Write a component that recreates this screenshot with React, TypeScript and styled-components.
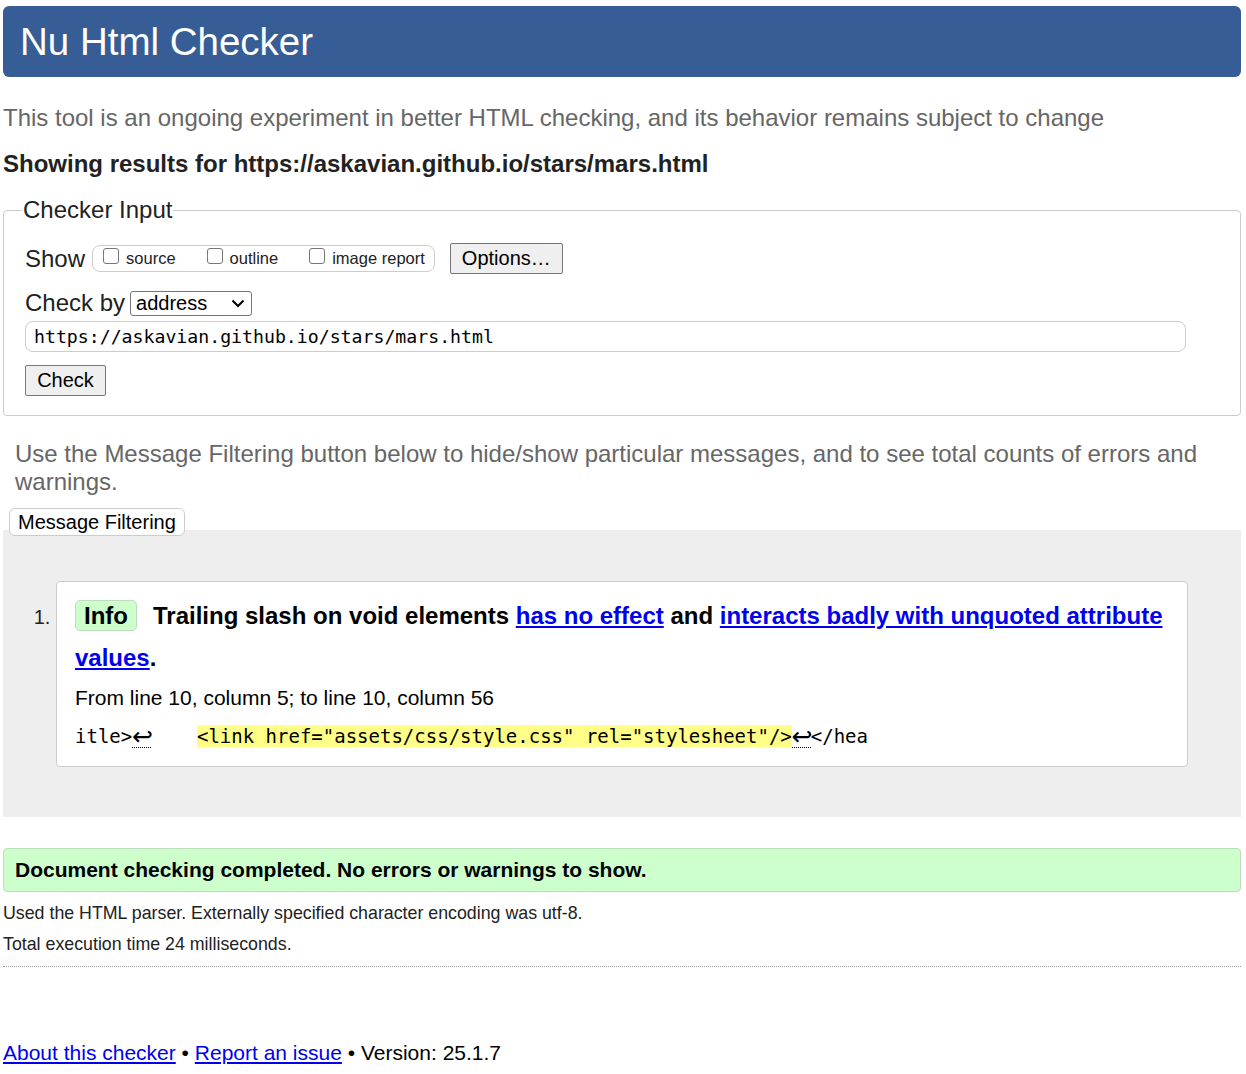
import React from "react";
import styled, { createGlobalStyle } from "styled-components";

const Global = createGlobalStyle`
  html, body { margin: 0; padding: 0; background: #fff; }
  body { font-family: "Liberation Sans", Arial, sans-serif; color: #000; }
`;

const Page = styled.div`
  padding: 6px 5px 0 3px;
`;

const Header = styled.h1`
  margin: 0;
  background: #365d95;
  color: #fff;
  border-radius: 6px;
  height: 71px;
  display: flex;
  align-items: center;
  padding-left: 17px;
  font-size: 38.5px;
  font-weight: normal;
`;

const Intro = styled.p`
  margin: 26px 0 0 0;
  color: #666;
  font-size: 24px;
  line-height: 30px;
`;

const Results = styled.h2`
  margin: 16px 0 0 0;
  font-size: 24px;
  line-height: 30px;
  color: #222;
`;

const Fieldset = styled.fieldset`
  margin: 17px 0 0 0;
  border: 1px solid #ccc;
  border-radius: 4px;
  padding: 4px 54px 19px 21px;
`;

const Legend = styled.legend`
  font-size: 24px;
  padding: 0 1px;
  margin-left: -3px;
  color: #222;
`;

const Row = styled.div`
  display: flex;
  align-items: center;
  font-size: 24px;
  color: #222;
`;

const ShowRow = styled(Row)`
  margin-top: 15px;
  gap: 7px;
`;

const CheckGroup = styled.div`
  display: flex;
  align-items: center;
  border: 1px solid #ccc;
  border-radius: 8px;
  height: 25px;
  padding: 0 9px 0 10px;
  gap: 31px;
  margin-right: 8px;
`;

const CheckLabel = styled.label`
  display: flex;
  align-items: center;
  font-size: 16.5px;
  color: #222;
  gap: 7px;
`;

const Box = styled.span`
  width: 16px;
  height: 16px;
  border: 1px solid #767676;
  border-radius: 3px;
  box-sizing: border-box;
  margin-top: -6px;
`;

const Button = styled.button`
  font-family: "Liberation Sans", Arial, sans-serif;
  font-size: 20px;
  color: #000;
  background: #efefef;
  border: 1px solid #767676;
  border-radius: 2px;
  padding: 0 11px;
  height: 31px;
`;

const CheckByRow = styled(Row)`
  margin-top: 15px;
  gap: 5px;
`;

const Select = styled.div`
  display: flex;
  align-items: center;
  justify-content: space-between;
  width: 122px;
  height: 25px;
  box-sizing: border-box;
  border: 1px solid #767676;
  border-radius: 3px;
  padding: 0 6px 0 5px;
  font-size: 20px;
  color: #000;
`;

const UrlInput = styled.div`
  margin-top: 4px;
  height: 31px;
  box-sizing: border-box;
  border: 1px solid #ccc;
  border-radius: 8px;
  display: flex;
  align-items: center;
  padding-left: 8px;
  font-family: "DejaVu Sans Mono", "Liberation Mono", monospace;
  font-size: 18.2px;
  color: #000;
`;

const CheckButton = styled(Button)`
  margin-top: 13px;
  width: 81px;
`;

const Filtering = styled.p`
  margin: 24px 0 0 12px;
  color: #666;
  font-size: 24px;
  line-height: 28px;
`;

const FilterButton = styled.button`
  display: block;
  font-family: "Liberation Sans", Arial, sans-serif;
  font-size: 20px;
  color: #000;
  background: #fff;
  border: 1px solid #ccc;
  border-radius: 6px;
  height: 28px;
  padding: 0 8px;
  margin: 12px 0 0 6px;
  position: relative;
  z-index: 1;
`;

const Results2 = styled.div`
  background: #eee;
  margin-top: -6px;
  padding: 51px 53px 50px 0;
`;

const List = styled.ol`
  margin: 0;
  padding: 0 0 0 53px;
`;

const Item = styled.li`
  background: #fff;
  border: 1px solid #ccc;
  border-radius: 4px;
  padding: 13px 18px 18px 18px;
  font-size: 20px;
  &::marker { color: #222; font-size: 20px; }
`;

const Message = styled.p`
  margin: 0;
  font-size: 24px;
  font-weight: bold;
  line-height: 42px;
`;

const Badge = styled.strong`
  display: inline-block;
  background: #cfc;
  border: 1px solid #bdb;
  border-radius: 5px;
  padding: 0 8px;
  line-height: 29px;
  margin-right: 16px;
`;

const Link = styled.a`
  color: #00e;
  text-decoration: underline;
`;

const Location = styled.p`
  margin: 7px 0 0 0;
  font-size: 21px;
  color: #000;
`;

const Extract = styled.p`
  margin: 14px 0 0 0;
  font-family: "DejaVu Sans Mono", "Liberation Mono", monospace;
  font-size: 19px;
  line-height: 24px;
  white-space: pre;
  color: #000;
`;

const Mark = styled.mark`
  background: #ff8;
  color: #000;
`;

const Lf = styled.span`
  display: inline-block;
  font-family: "DejaVu Sans", sans-serif;
  font-size: 25px;
  line-height: 20px;
  width: 19px;
  border-bottom: 1px dotted #000;
  vertical-align: -2px;
`;

const Success = styled.p`
  margin: 31px 0 0 0;
  background: #cfc;
  border: 1px solid #bdb;
  border-radius: 4px;
  padding: 0 11px;
  height: 42px;
  display: flex;
  align-items: center;
  font-size: 21px;
  font-weight: bold;
  color: #000;
`;

const DetailsBlock = styled.div`
  margin-top: 6px;
`;

const Details = styled.p`
  margin: 0;
  font-size: 17.8px;
  line-height: 31px;
  color: #222;
`;

const Rule = styled.hr`
  margin: 6px 0 0 0;
  border: none;
  border-top: 1px dotted #999;
`;

const Footer = styled.p`
  margin: 74px 0 0 0;
  font-size: 21px;
  color: #000;
`;

export default function App() {
  return (
    <Page>
      <Global />
      <Header>Nu Html Checker</Header>
      <Intro>
        This tool is an ongoing experiment in better HTML checking, and its behavior remains subject to change
      </Intro>
      <Results>Showing results for https://askavian.github.io/stars/mars.html</Results>
      <Fieldset>
        <Legend>Checker Input</Legend>
        <ShowRow>
          Show
          <CheckGroup>
            <CheckLabel><Box />source</CheckLabel>
            <CheckLabel><Box />outline</CheckLabel>
            <CheckLabel><Box />image report</CheckLabel>
          </CheckGroup>
          <Button>Options…</Button>
        </ShowRow>
        <CheckByRow>
          Check by
          <Select>
            address
            <svg width="14" height="9" viewBox="0 0 14 9">
              <path d="M1.5 1.5 L7 7 L12.5 1.5" fill="none" stroke="#000" strokeWidth="2" />
            </svg>
          </Select>
        </CheckByRow>
        <UrlInput>https://askavian.github.io/stars/mars.html</UrlInput>
        <CheckButton>Check</CheckButton>
      </Fieldset>
      <Filtering>
        Use the Message Filtering button below to hide/show particular messages, and to see total counts of errors and warnings.
      </Filtering>
      <FilterButton>Message Filtering</FilterButton>
      <Results2>
        <List>
          <Item>
            <Message>
              <Badge>Info</Badge>
              Trailing slash on void elements <Link href="#">has no effect</Link> and{" "}
              <Link href="#">interacts badly with unquoted attribute values</Link>.
            </Message>
            <Location>From line 10, column 5; to line 10, column 56</Location>
            <Extract>
              itle&gt;<Lf>↩</Lf>{"    "}<Mark>&lt;link href="assets/css/style.css" rel="stylesheet"/&gt;</Mark><Lf>↩</Lf>&lt;/hea
            </Extract>
          </Item>
        </List>
      </Results2>
      <Success>Document checking completed. No errors or warnings to show.</Success>
      <DetailsBlock>
        <Details>Used the HTML parser. Externally specified character encoding was utf-8.</Details>
        <Details>Total execution time 24 milliseconds.</Details>
      </DetailsBlock>
      <Rule />
      <Footer>
        <Link href="#">About this checker</Link> • <Link href="#">Report an issue</Link> • Version: 25.1.7
      </Footer>
    </Page>
  );
}
